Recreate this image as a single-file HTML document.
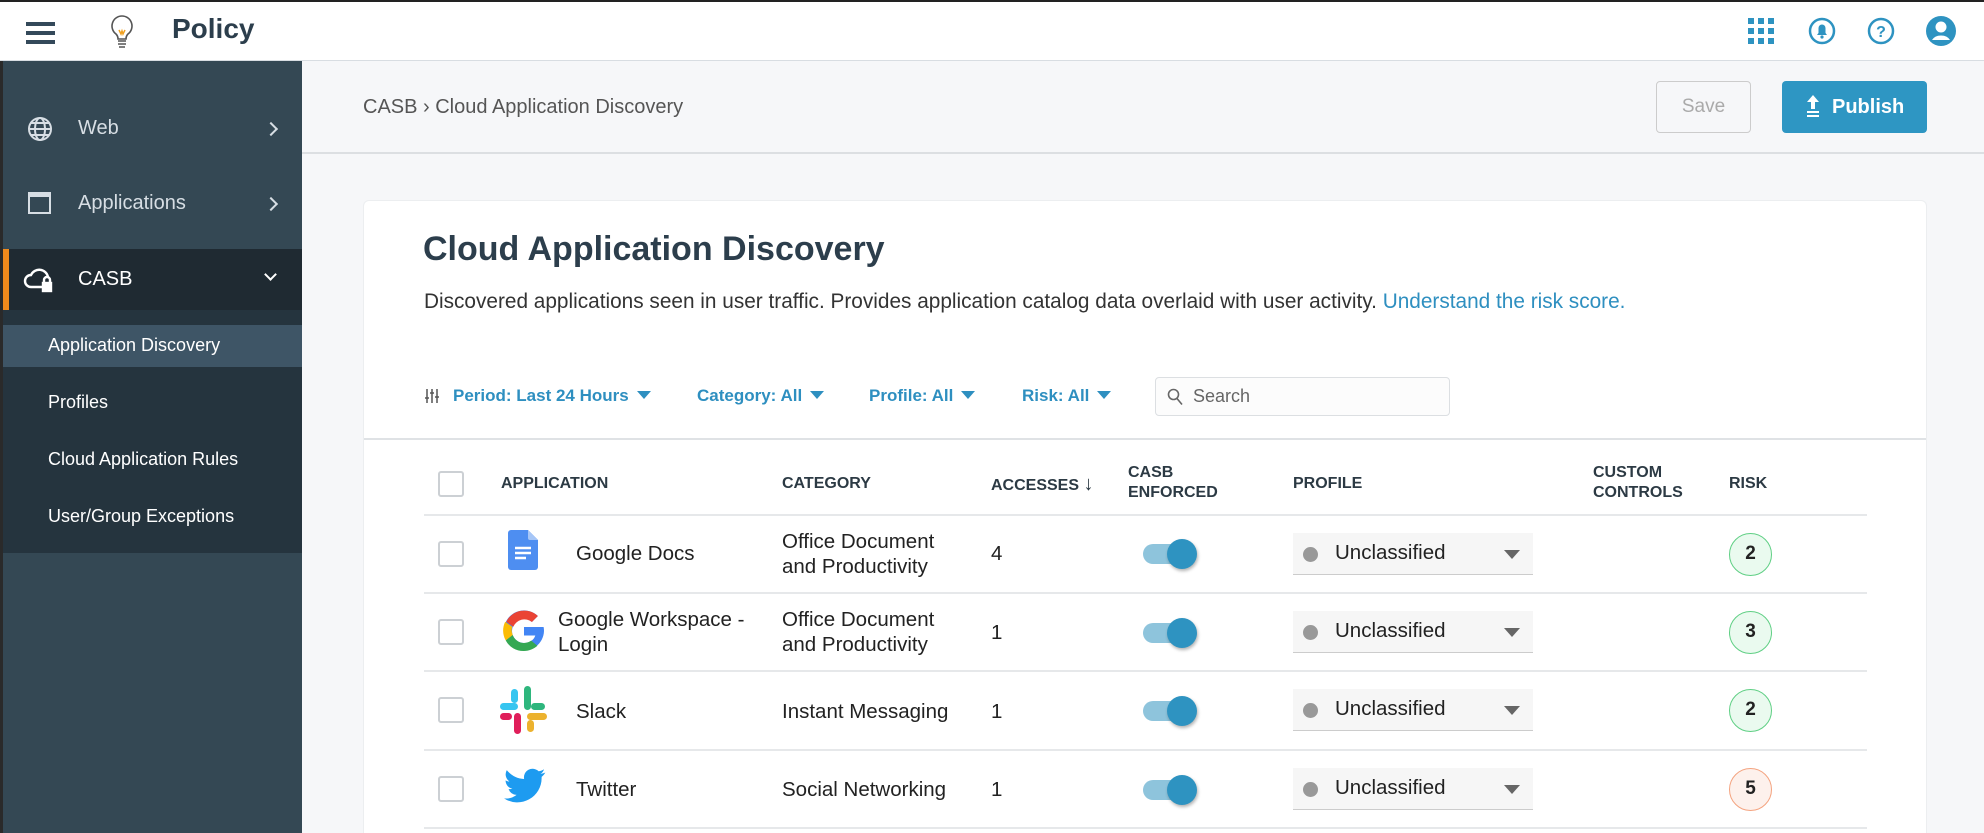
<!DOCTYPE html>
<html style="overflow:hidden;height:833px"><head><meta charset="utf-8"><style>
*{box-sizing:border-box;margin:0;padding:0}
body{width:1984px;height:833px;overflow:hidden;background:#f6f7f9;font-family:"Liberation Sans",Arial,sans-serif;position:relative;color:#222}
.a{position:absolute}
.top{left:0;top:0;width:1984px;height:61px;background:#fff;border-bottom:1px solid #d8dde2;border-top:2px solid #222}
.side{left:0;top:61px;width:302px;height:772px;background:#344854;border-left:3px solid #2a2a2a}
.si{color:#d7dee4;font-size:20px}
.sub{color:#fff;font-size:18px}
.hd{font-size:16px;font-weight:bold;color:#2c3a44;line-height:20px}
.cell{font-size:20.5px;color:#222;line-height:25px}
.tg{width:56px;height:30px}
.tg .tr{position:absolute;left:2px;top:6px;width:44px;height:20px;border-radius:10px;background:#8ec4dc}
.tg .kn{position:absolute;left:26px;top:1px;width:30px;height:30px;border-radius:50%;background:#2e93c1;box-shadow:1px 2px 3px rgba(0,0,0,.3)}
.dd{width:240px;height:42px;background:#f6f6f6;border-bottom:1px solid #ccc}
.dd .dot{position:absolute;left:10px;top:14px;width:15px;height:15px;border-radius:50%;background:#999}
.dd .t{position:absolute;left:42px;top:8px;font-size:20.5px;color:#222}
.dd .c{position:absolute;left:211px;top:17px;border-left:8px solid transparent;border-right:8px solid transparent;border-top:9px solid #666}
.rk{width:43px;height:43px;border-radius:50%;border:1.5px solid #5fcf84;background:#eafaef;text-align:center;line-height:40px;font-size:19px;font-weight:bold;color:#222}
.cb{width:26px;height:26px;border:2px solid #ccd0d4;border-radius:3px;background:#fff}
.ln{height:2px;background:#e6e8ea}
.f{font-size:17px;font-weight:bold;color:#2e8fc0}
.f:after{content:"";display:inline-block;margin-left:8px;border-left:7px solid transparent;border-right:7px solid transparent;border-top:8px solid #2e8fc0;vertical-align:2px}
.chev{width:10px;height:10px;border-right:2.5px solid #d7dee4;border-top:2.5px solid #d7dee4;transform:rotate(45deg)}
</style></head><body>
<div class="a top"></div>
<div class="a" style="left:26px;top:22px;width:29px;height:4px;background:#34495a;box-shadow:0 9px 0 #34495a,0 18px 0 #34495a"></div>
<svg class="a" style="left:108px;top:14px" width="28" height="36" viewBox="0 0 28 36"><path d="M14 2a10 10 0 0 0-6 18c1 1 2 3 2 5h8c0-2 1-4 2-5A10 10 0 0 0 14 2z" fill="none" stroke="#555" stroke-width="1.6"/><path d="M11 16l2 4 1-3 1 3 2-4" stroke="#f0a020" fill="none" stroke-width="1.5"/><path d="M10 27h8M10 30h8M11 33h6" stroke="#555" stroke-width="1.6"/></svg>
<div class="a" style="left:172px;top:13px;font-size:28px;font-weight:bold;color:#2c3e4c">Policy</div>
<svg class="a" style="left:1748px;top:18px" width="26" height="26" viewBox="0 0 26 26" fill="#2e93c1"><rect x="0" y="0" width="6" height="6"/><rect x="10" y="0" width="6" height="6"/><rect x="20" y="0" width="6" height="6"/><rect x="0" y="10" width="6" height="6"/><rect x="10" y="10" width="6" height="6"/><rect x="20" y="10" width="6" height="6"/><rect x="0" y="20" width="6" height="6"/><rect x="10" y="20" width="6" height="6"/><rect x="20" y="20" width="6" height="6"/></svg>
<svg class="a" style="left:1808px;top:17px" width="28" height="28" viewBox="0 0 28 28"><circle cx="14" cy="14" r="12" fill="none" stroke="#2e93c1" stroke-width="2.5"/><path d="M9 18h10l-1.5-2v-5a3.5 3.5 0 0 0-7 0v5z" fill="#2e93c1"/><circle cx="14" cy="20" r="1.6" fill="#2e93c1"/></svg>
<svg class="a" style="left:1867px;top:17px" width="28" height="28" viewBox="0 0 28 28"><circle cx="14" cy="14" r="12" fill="none" stroke="#2e93c1" stroke-width="2.5"/><text x="14" y="20" text-anchor="middle" font-size="16" font-weight="bold" fill="#2e93c1" font-family="Liberation Sans">?</text></svg>
<svg class="a" style="left:1926px;top:16px" width="30" height="30" viewBox="0 0 30 30"><circle cx="15" cy="15" r="15" fill="#2e93c1"/><circle cx="15" cy="11" r="5.5" fill="#fff"/><path d="M6 24a10 8 0 0 1 18 0z" fill="#fff"/></svg>

<div class="a side"></div>
<svg class="a" style="left:27px;top:116px" width="26" height="26" viewBox="0 0 26 26" fill="none" stroke="#d7dee4" stroke-width="2"><circle cx="13" cy="13" r="11"/><ellipse cx="13" cy="13" rx="5" ry="11"/><path d="M2 13h22M4 7h18M4 19h18"/></svg>
<div class="a si" style="left:78px;top:117px">Web</div>
<div class="a chev" style="left:266px;top:124px"></div>
<div class="a" style="left:28px;top:192px;width:23px;height:22px;border:2.5px solid #d7dee4;border-top-width:5px"></div>
<div class="a si" style="left:78px;top:192px">Applications</div>
<div class="a chev" style="left:266px;top:199px"></div>
<div class="a" style="left:3px;top:249px;width:299px;height:61px;background:#1f2a32;border-left:6px solid #f08a1c"></div>
<svg class="a" style="left:23px;top:264px" width="34" height="32" viewBox="0 0 34 32" fill="none" stroke="#fff" stroke-width="2.4"><path d="M19 23H8a6 6 0 0 1 0-12 9 9 0 0 1 17 2"/><rect x="20" y="19" width="8" height="8" fill="#fff"/><path d="M21 19v-3a3 3 0 0 1 6 0v3"/></svg>
<div class="a" style="left:78px;top:268px;font-size:20px;color:#fff">CASB</div>
<div class="a" style="left:266px;top:270px;width:9px;height:9px;border-right:2.5px solid #fff;border-bottom:2.5px solid #fff;transform:rotate(45deg)"></div>
<div class="a" style="left:3px;top:310px;width:299px;height:243px;background:#25343e"></div>
<div class="a" style="left:3px;top:325px;width:299px;height:42px;background:#3e5566"></div>
<div class="a sub" style="left:48px;top:335px">Application Discovery</div>
<div class="a sub" style="left:48px;top:392px">Profiles</div>
<div class="a sub" style="left:48px;top:449px">Cloud Application Rules</div>
<div class="a sub" style="left:48px;top:506px">User/Group Exceptions</div>

<div class="a" style="left:363px;top:96px;font-size:20px;color:#555">CASB › Cloud Application Discovery</div>
<div class="a" style="left:1656px;top:81px;width:95px;height:52px;border:1.5px solid #ccc;border-radius:4px;text-align:center;line-height:50px;font-size:19px;color:#aaa">Save</div>
<div class="a" style="left:1782px;top:81px;width:145px;height:52px;background:#2e96c3;border-radius:4px;color:#fff;font-size:20px;font-weight:bold;line-height:52px;padding-left:50px">Publish</div>
<svg class="a" style="left:1806px;top:95px" width="14" height="22" viewBox="0 0 14 22" fill="#fff"><path d="M7 0l6 7H9v7H5V7H1z"/><rect x="1" y="16" width="12" height="2"/><rect x="1" y="20" width="12" height="2"/></svg>
<div class="a" style="left:302px;top:152px;width:1682px;height:2px;background:#dcdfe2"></div>

<div class="a" style="left:363px;top:200px;width:1564px;height:633px;background:#fff;border-radius:6px 6px 0 0;border:1px solid #eceef0;border-bottom:none"></div>
<div class="a" style="left:423px;top:230px;font-size:34px;font-weight:bold;color:#2c3e4c">Cloud Application Discovery</div>
<div class="a" style="left:424px;top:290px;font-size:20.8px;color:#333">Discovered applications seen in user traffic. Provides application catalog data overlaid with user activity. <span style="color:#2e8fc0">Understand the risk score.</span></div>

<svg class="a" style="left:424px;top:388px" width="16" height="16" viewBox="0 0 16 16" stroke="#555" stroke-width="1.5"><path d="M3 1v14M8 1v14M13 1v14M1 10h4M6 5h4M11 9h4"/></svg>
<div class="a f" style="left:453px;top:386px">Period: Last 24 Hours</div>
<div class="a f" style="left:697px;top:386px">Category: All</div>
<div class="a f" style="left:869px;top:386px">Profile: All</div>
<div class="a f" style="left:1022px;top:386px">Risk: All</div>
<div class="a" style="left:1155px;top:377px;width:295px;height:39px;border:1px solid #dcdfe2;border-radius:4px;background:#fcfcfc"></div>
<svg class="a" style="left:1167px;top:388px" width="16" height="18" viewBox="0 0 16 18" fill="none" stroke="#666" stroke-width="1.6"><circle cx="6.5" cy="6.5" r="5"/><path d="M10 10.5l5 6"/></svg>
<div class="a" style="left:1193px;top:386px;font-size:18px;color:#666">Search</div>
<div class="a" style="left:364px;top:438px;width:1562px;height:1.5px;background:#dfe2e5"></div>

<div class="a cb" style="left:438px;top:471px"></div>
<div class="a hd" style="left:501px;top:474px">APPLICATION</div>
<div class="a hd" style="left:782px;top:474px">CATEGORY</div>
<div class="a hd" style="left:991px;top:474px">ACCESSES <span style="font-size:20px;font-weight:normal">↓</span></div>
<div class="a hd" style="left:1128px;top:463px">CASB<br>ENFORCED</div>
<div class="a hd" style="left:1293px;top:474px">PROFILE</div>
<div class="a hd" style="left:1593px;top:463px">CUSTOM<br>CONTROLS</div>
<div class="a hd" style="left:1729px;top:474px">RISK</div>
<div class="a ln" style="left:424px;top:514px;width:1443px"></div>

<div class="a cb" style="left:438px;top:541px"></div>
<svg class="a" style="left:508px;top:530px" width="30" height="40" viewBox="0 0 30 40"><path d="M3 0h17l10 10v27a3 3 0 0 1-3 3H3a3 3 0 0 1-3-3V3a3 3 0 0 1 3-3z" fill="#4e8ef1"/><path d="M20 0l10 10H22a2 2 0 0 1-2-2z" fill="#a6c6f7"/><path d="M7 18h16M7 23h16M7 28h11" stroke="#fff" stroke-width="2.5"/></svg>
<div class="a cell" style="left:576px;top:541px">Google Docs</div>
<div class="a cell" style="left:782px;top:529px">Office Document<br>and Productivity</div>
<div class="a cell" style="left:991px;top:541px">4</div>
<div class="a tg" style="left:1141px;top:538px"><div class="tr"></div><div class="kn"></div></div>
<div class="a dd" style="left:1293px;top:533px"><div class="dot"></div><div class="t">Unclassified</div><div class="c"></div></div>
<div class="a rk" style="left:1729px;top:533px">2</div>
<div class="a ln" style="left:424px;top:592px;width:1443px"></div>

<div class="a cb" style="left:438px;top:619px"></div>
<svg class="a" style="left:500px;top:606px" width="48" height="50" viewBox="0 0 48 48"><path d="M43.6 20H24v8.5h11.3C33.7 33.3 29.3 36 24 36a12 12 0 0 1 0-24c3 0 5.8 1.1 7.9 3l6-6A20 20 0 1 0 44 24c0-1.3-.1-2.7-.4-4z" fill="#4285f4"/><path d="M6.3 14.7l7 5.1A12 12 0 0 1 31.9 15l6-6A20 20 0 0 0 6.3 14.7z" fill="#ea4335"/><path d="M24 44c5.2 0 9.9-2 13.4-5.2l-6.2-5.2A12 12 0 0 1 12.7 28l-7 5.4A20 20 0 0 0 24 44z" fill="#34a853"/><path d="M12.7 28a12 12 0 0 1-.5-8.2l-7-5.1a20 20 0 0 0 .5 18.7z" fill="#fbbc05"/></svg>
<div class="a cell" style="left:558px;top:607px">Google Workspace -<br>Login</div>
<div class="a cell" style="left:782px;top:607px">Office Document<br>and Productivity</div>
<div class="a cell" style="left:991px;top:620px">1</div>
<div class="a tg" style="left:1141px;top:617px"><div class="tr"></div><div class="kn"></div></div>
<div class="a dd" style="left:1293px;top:611px"><div class="dot"></div><div class="t">Unclassified</div><div class="c"></div></div>
<div class="a rk" style="left:1729px;top:611px">3</div>
<div class="a ln" style="left:424px;top:670px;width:1443px"></div>

<div class="a cb" style="left:438px;top:697px"></div>
<svg class="a" style="left:500px;top:686px" width="48" height="48" viewBox="0 0 48 48"><rect x="0" y="17" width="18" height="7" rx="3.5" fill="#36c5f0"/><rect x="11" y="3" width="7" height="14" rx="3.5" fill="#36c5f0"/><rect x="24" y="0" width="7" height="24" rx="3.5" fill="#2eb67d"/><rect x="31" y="17" width="14" height="7" rx="3.5" fill="#2eb67d"/><rect x="27" y="27" width="20" height="7" rx="3.5" fill="#ecb22e"/><rect x="27" y="34" width="7" height="12" rx="3.5" fill="#ecb22e"/><rect x="14" y="27" width="7" height="21" rx="3.5" fill="#e01e5a"/><rect x="0" y="27" width="12" height="7" rx="3.5" fill="#e01e5a"/></svg>
<div class="a cell" style="left:576px;top:699px">Slack</div>
<div class="a cell" style="left:782px;top:699px">Instant Messaging</div>
<div class="a cell" style="left:991px;top:699px">1</div>
<div class="a tg" style="left:1141px;top:695px"><div class="tr"></div><div class="kn"></div></div>
<div class="a dd" style="left:1293px;top:689px"><div class="dot"></div><div class="t">Unclassified</div><div class="c"></div></div>
<div class="a rk" style="left:1729px;top:689px">2</div>
<div class="a ln" style="left:424px;top:749px;width:1443px"></div>

<div class="a cb" style="left:438px;top:776px"></div>
<svg class="a" style="left:504px;top:768px" width="42" height="36" viewBox="0 0 24 20"><path d="M23.6 2.3c-.9.4-1.8.6-2.8.8a4.9 4.9 0 0 0 2.1-2.7c-1 .6-2 1-3.1 1.2A4.9 4.9 0 0 0 11.5 6 13.9 13.9 0 0 1 1.6.9a4.9 4.9 0 0 0 1.5 6.5c-.8 0-1.6-.2-2.2-.6 0 2.4 1.7 4.4 3.9 4.8-.7.2-1.5.2-2.2.1a4.9 4.9 0 0 0 4.6 3.4A9.9 9.9 0 0 1 0 17.1 13.9 13.9 0 0 0 21.5 5.4V4.8c.9-.7 1.6-1.5 2.1-2.5z" fill="#1d9bf0"/></svg>
<div class="a cell" style="left:576px;top:777px">Twitter</div>
<div class="a cell" style="left:782px;top:777px">Social Networking</div>
<div class="a cell" style="left:991px;top:777px">1</div>
<div class="a tg" style="left:1141px;top:774px"><div class="tr"></div><div class="kn"></div></div>
<div class="a dd" style="left:1293px;top:768px"><div class="dot"></div><div class="t">Unclassified</div><div class="c"></div></div>
<div class="a rk" style="left:1729px;top:768px;border-color:#f4a37f;background:#fdf1ec">5</div>
<div class="a ln" style="left:424px;top:827px;width:1443px"></div>
</body></html>
